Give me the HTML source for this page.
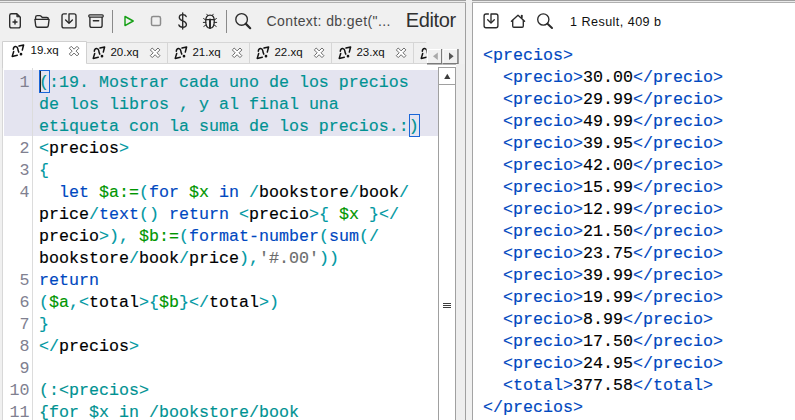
<!DOCTYPE html>
<html>
<head>
<meta charset="utf-8">
<title>BaseX</title>
<style>
html,body{margin:0;padding:0;}
body{width:795px;height:420px;overflow:hidden;background:#f0f0f0;position:relative;font-family:"Liberation Sans",sans-serif;color:#202020;}
.abs{position:absolute;}
#topline{left:0;top:0;width:795px;height:3px;background:linear-gradient(#a0a0a0 0 1px,#ebebeb 1px 2px,#b0b0b0 2px 3px);}
#topwhite{left:466px;top:0;width:6px;height:3px;background:#f0f0f0;}
/* toolbar */
.ico{position:absolute;overflow:visible;}
.sep{position:absolute;width:1px;background:#a0a0a0;}
#ctx{left:266.5px;top:13px;font-size:14px;color:#484848;letter-spacing:0.4px;white-space:nowrap;line-height:16px;}
#edt{left:405.8px;top:9px;font-size:20px;color:#303030;letter-spacing:-0.4px;white-space:nowrap;line-height:22px;}
/* tabs */
.tab{position:absolute;top:43px;height:19px;border-right:1px solid #d0d0d0;box-sizing:border-box;font-size:11.5px;color:#101010;white-space:nowrap;}
.tab .lbl{position:absolute;left:26px;top:3px;}
.tab.sel{top:41px;height:22px;background:#fff;border:1px solid #d8d8d8;border-bottom:none;}
.tab.sel .lbl{top:4px;left:26px;}
.tl{position:absolute;font-size:11.5px;color:#101010;white-space:nowrap;line-height:13px;}
/* editor */
#leftpanel{left:0;top:3px;width:465px;height:417px;border-right:1px solid #a0a0a0;}
#edbox{left:2px;top:64px;width:454px;height:356px;background:#fff;border-left:1px solid #d8d8d8;box-sizing:border-box;}
#hl{left:4px;top:70px;width:434px;height:66px;background:#e4e4f0;}
#gutline{left:32px;top:67px;width:1px;height:353px;background:#dcdcdc;}
#brk1{left:39px;top:70px;width:11px;height:23px;border:1px solid #1a66d8;box-sizing:border-box;}
#brk2{left:409px;top:114px;width:11px;height:23px;border:1px solid #1a66d8;box-sizing:border-box;}
#caret{left:40px;top:71px;width:1px;height:21px;background:#202020;}
.code{position:absolute;font-family:"Liberation Mono",monospace;font-size:16.67px;line-height:22px;white-space:pre;color:#000;-webkit-text-stroke:0.15px;}
.ln{position:absolute;font-family:"Liberation Mono",monospace;font-size:16.67px;line-height:22px;color:#808090;text-align:right;width:30px;left:-0.5px;white-space:pre;}
.c{color:#009292;}
.k{color:#0048c0;}
.v{color:#009600;}
.p{color:#0098a2;}
.s{color:#6c6c6c;}
.t{color:#0048c0;}
/* scrollbar */
#sb{left:456px;top:64px;width:9px;height:356px;background:#eeeeee;}
#sbthumb{left:438px;top:84px;width:18px;height:340px;background:#fff;border:1px solid #a0a0a0;box-sizing:border-box;}
#sbup{left:438px;top:67px;width:18px;height:18px;background:#fff;border:1px solid #a0a0a0;box-sizing:border-box;}
/* divider */
#div1{display:none}
#div2{display:none}
#rp{left:472px;top:3px;width:323px;height:417px;background:#fff;border-left:1px solid #a4a4a4;box-sizing:border-box;}
#res{left:570px;top:15px;font-size:12.6px;color:#101010;letter-spacing:0.45px;white-space:nowrap;line-height:14px;}
</style>
</head>
<body>
<div class="abs" id="rp"></div>
<div class="abs" id="topline"></div>
<div class="abs" id="topwhite"></div>

<!-- TOOLBAR ICONS -->
<svg class="abs" style="left:0;top:0" width="795" height="40" viewBox="0 0 795 40" fill="none" stroke="#2a2a2a" stroke-width="1.35" stroke-linecap="round" stroke-linejoin="round">
<!-- new file -->
<path d="M11.5 13.7 H16.8 L20.3 17.2 V26 Q20.3 27.9 18.4 27.9 H11.6 Q9.7 27.9 9.7 26 V15.5 Q9.7 13.7 11.5 13.7 Z"/>
<path d="M17.2 14.1 L19.9 16.8 H17.2 Z" fill="#2a2a2a" stroke-width="1"/>
<path d="M13 22 H17 M15 20 V24" stroke-width="1.4"/>
<!-- folder -->
<path d="M35.6 19.3 V17.3 Q35.6 15.6 37.3 15.6 H39.8 Q40.6 15.6 41.2 16.3 L42.3 17.5 H46.8 Q48.4 17.5 48.4 19.3"/>
<path d="M34.9 19.4 H49.1 L48.3 25.6 Q48.1 27.2 46.5 27.2 H37.5 Q35.9 27.2 35.7 25.6 Z"/>
<!-- save -->
<path d="M66.4 13.8 H63.9 Q62 13.8 62 15.7 V25.9 Q62 27.8 63.9 27.8 H74.1 Q76 27.8 76 25.9 V15.7 Q76 13.8 74.1 13.8 H69 V22.6"/>
<path d="M65.6 20 L69 23.2 L72.4 20"/>
<!-- archive -->
<rect x="88.7" y="14.95" width="14.6" height="2.2" rx="1.1" stroke-width="1.2"/>
<path d="M89.9 17.3 V25.4 Q89.9 27.3 91.8 27.3 H100.2 Q102.1 27.3 102.1 25.4 V17.5"/>
<path d="M93.3 20.7 H98.7"/>
<!-- sep -->
<path d="M112.5 10 V33" stroke="#8a8a8a" stroke-width="1" stroke-linecap="butt"/>
<!-- play -->
<path d="M125 16.5 V25.6 L133.2 21 Z" stroke="#16a016" stroke-width="1.45"/>
<!-- stop -->
<rect x="151.5" y="16.6" width="9" height="8.9" rx="1.6" stroke="#8c8c8c" stroke-width="1.5"/>
<!-- dollar -->
<path d="M186.2 16.6 Q185.6 14.6 182.7 14.6 Q179.3 14.6 179.3 17.4 Q179.3 19.6 182.7 20.8 Q186.4 22 186.4 24.4 Q186.4 27.2 182.7 27.2 Q179.6 27.2 178.9 25"/>
<path d="M182.7 12.8 V29"/>
<!-- bug -->
<path d="M205.7 21 Q205.7 15.2 210 15.2 Q214.3 15.2 214.3 21 Q214.3 28.2 210 28.2 Q205.7 28.2 205.7 21 Z" stroke-width="1.3"/>
<path d="M206 19.6 H214" stroke-width="1.3"/>
<path d="M210 19.6 V28" stroke-width="2"/>
<path d="M207.8 15.6 L206.8 14.2 M212.2 15.6 L213.2 14.2 M205.8 20 L203.6 18.6 M214.2 20 L216.4 18.6 M205.8 22.4 H203.3 M214.2 22.4 H216.7 M206.2 24.8 L203.8 26.4 M213.8 24.8 L216.2 26.4" stroke-width="1"/>
<!-- sep -->
<path d="M226.5 10 V33" stroke="#8a8a8a" stroke-width="1" stroke-linecap="butt"/>
<!-- search -->
<circle cx="241.6" cy="19.4" r="5.8"/>
<path d="M245.9 23.9 L250.2 28.2" stroke-width="2.2"/>
<!-- right: save -->
<path d="M488.4 14 H486 Q484.1 14 484.1 15.9 V25.8 Q484.1 27.7 486 27.7 H496 Q497.9 27.7 497.9 25.8 V15.9 Q497.9 14 496 14 H491 V22.4"/>
<path d="M487.7 19.8 L491 23 L494.3 19.8"/>
<!-- home -->
<path d="M511.4 21.2 L518 15.2 L524.6 21.2"/>
<path d="M512.7 20.4 V26 Q512.7 27.2 513.9 27.2 H522.1 Q523.3 27.2 523.3 26 V20.4"/>
<path d="M521.8 17.6 V15.6" stroke-width="1.8"/>
<!-- search -->
<circle cx="543.3" cy="19.5" r="5.6"/>
<path d="M547.5 23.8 L552 28" stroke-width="2"/>
</svg>
<div class="abs" id="ctx">Context: db:get("...</div>
<div class="abs" id="edt">Editor</div>

<div class="abs" id="leftpanel"></div>
<div class="abs" id="edbox"></div>
<div class="abs" id="hl"></div>
<div class="abs" id="gutline"></div>
<div class="abs" id="brk1"></div>
<div class="abs" id="brk2"></div>
<div class="abs" id="caret"></div>
<!-- TABS -->
<svg class="abs" style="left:0;top:38px" width="470" height="30" viewBox="0 38 470 30">
<path d="M86.5 42.5 H426.5" stroke="#d6d6d6" stroke-width="1" fill="none"/>
<path d="M86.5 63.5 H458" stroke="#d6d6d6" stroke-width="1" fill="none"/>
<path d="M167.5 43 V63" stroke="#d6d6d6" stroke-width="1" fill="none"/>
<path d="M249.5 43 V63" stroke="#d6d6d6" stroke-width="1" fill="none"/>
<path d="M331.5 43 V63" stroke="#d6d6d6" stroke-width="1" fill="none"/>
<path d="M413.5 43 V63" stroke="#d6d6d6" stroke-width="1" fill="none"/>
<path d="M2.5 68 V41.5 H86.5 V63.5" stroke="#d0d0d0" stroke-width="1" fill="#fff"/>
<rect x="3" y="42" width="83" height="26" fill="#fff"/>
<g transform="translate(0.00,0.00)" stroke="#111" stroke-width="1.5" fill="none" stroke-linecap="round" stroke-linejoin="round"><path d="M13.7 51.5 L12.2 56.4 L17.3 55.2"/><path d="M13.3 49.3 Q13.5 46.3 15.7 46.4 Q17.6 46.6 17.8 48.7 Q18 50.5 18.8 52.1"/><circle cx="21" cy="54.2" r="0.6" fill="#111"/><path d="M19 46.1 L23.6 45 L22.3 50.1"/></g>
<g transform="translate(81.00,2.00)" stroke="#111" stroke-width="1.5" fill="none" stroke-linecap="round" stroke-linejoin="round"><path d="M13.7 51.5 L12.2 56.4 L17.3 55.2"/><path d="M13.3 49.3 Q13.5 46.3 15.7 46.4 Q17.6 46.6 17.8 48.7 Q18 50.5 18.8 52.1"/><circle cx="21" cy="54.2" r="0.6" fill="#111"/><path d="M19 46.1 L23.6 45 L22.3 50.1"/></g>
<g transform="translate(163.00,2.00)" stroke="#111" stroke-width="1.5" fill="none" stroke-linecap="round" stroke-linejoin="round"><path d="M13.7 51.5 L12.2 56.4 L17.3 55.2"/><path d="M13.3 49.3 Q13.5 46.3 15.7 46.4 Q17.6 46.6 17.8 48.7 Q18 50.5 18.8 52.1"/><circle cx="21" cy="54.2" r="0.6" fill="#111"/><path d="M19 46.1 L23.6 45 L22.3 50.1"/></g>
<g transform="translate(245.00,2.00)" stroke="#111" stroke-width="1.5" fill="none" stroke-linecap="round" stroke-linejoin="round"><path d="M13.7 51.5 L12.2 56.4 L17.3 55.2"/><path d="M13.3 49.3 Q13.5 46.3 15.7 46.4 Q17.6 46.6 17.8 48.7 Q18 50.5 18.8 52.1"/><circle cx="21" cy="54.2" r="0.6" fill="#111"/><path d="M19 46.1 L23.6 45 L22.3 50.1"/></g>
<g transform="translate(327.00,2.00)" stroke="#111" stroke-width="1.5" fill="none" stroke-linecap="round" stroke-linejoin="round"><path d="M13.7 51.5 L12.2 56.4 L17.3 55.2"/><path d="M13.3 49.3 Q13.5 46.3 15.7 46.4 Q17.6 46.6 17.8 48.7 Q18 50.5 18.8 52.1"/><circle cx="21" cy="54.2" r="0.6" fill="#111"/><path d="M19 46.1 L23.6 45 L22.3 50.1"/></g>
<g transform="translate(409.00,2.00)" stroke="#111" stroke-width="1.5" fill="none" stroke-linecap="round" stroke-linejoin="round"><path d="M13.7 51.5 L12.2 56.4 L17.3 55.2"/><path d="M13.3 49.3 Q13.5 46.3 15.7 46.4 Q17.6 46.6 17.8 48.7 Q18 50.5 18.8 52.1"/><circle cx="21" cy="54.2" r="0.6" fill="#111"/><path d="M19 46.1 L23.6 45 L22.3 50.1"/></g>
<path d="M71.22 46.30 L74.10 49.18 L76.98 46.30 L78.90 48.22 L76.02 51.10 L78.90 53.98 L76.98 55.90 L74.10 53.02 L71.22 55.90 L69.30 53.98 L72.18 51.10 L69.30 48.22 Z" stroke="#6c6c6c" stroke-width="1" fill="#fff" stroke-linejoin="round"/>
<path d="M152.22 48.00 L155.10 50.88 L157.98 48.00 L159.90 49.92 L157.02 52.80 L159.90 55.68 L157.98 57.60 L155.10 54.72 L152.22 57.60 L150.30 55.68 L153.18 52.80 L150.30 49.92 Z" stroke="#6c6c6c" stroke-width="1" fill="#fff" stroke-linejoin="round"/>
<path d="M234.22 48.00 L237.10 50.88 L239.98 48.00 L241.90 49.92 L239.02 52.80 L241.90 55.68 L239.98 57.60 L237.10 54.72 L234.22 57.60 L232.30 55.68 L235.18 52.80 L232.30 49.92 Z" stroke="#6c6c6c" stroke-width="1" fill="#fff" stroke-linejoin="round"/>
<path d="M316.22 48.00 L319.10 50.88 L321.98 48.00 L323.90 49.92 L321.02 52.80 L323.90 55.68 L321.98 57.60 L319.10 54.72 L316.22 57.60 L314.30 55.68 L317.18 52.80 L314.30 49.92 Z" stroke="#6c6c6c" stroke-width="1" fill="#fff" stroke-linejoin="round"/>
<path d="M398.22 48.00 L401.10 50.88 L403.98 48.00 L405.90 49.92 L403.02 52.80 L405.90 55.68 L403.98 57.60 L401.10 54.72 L398.22 57.60 L396.30 55.68 L399.18 52.80 L396.30 49.92 Z" stroke="#6c6c6c" stroke-width="1" fill="#fff" stroke-linejoin="round"/>
<rect x="426.6" y="40" width="38" height="23" fill="#f0f0f0"/>
<rect x="427" y="49" width="15.5" height="15.5" fill="#f0f0f0"/><path d="M427.5 63.5 V49.5 H441.5" stroke="#ffffff" stroke-width="1" fill="none"/><path d="M427 63.75 H441.75 V49" stroke="#7a7a7a" stroke-width="1.5" fill="none"/>
<rect x="442.5" y="49" width="16.19999999999999" height="15.5" fill="#f0f0f0"/><path d="M443.0 63.5 V49.5 H457.7" stroke="#ffffff" stroke-width="1" fill="none"/><path d="M442.5 63.75 H457.95 V49" stroke="#7a7a7a" stroke-width="1.5" fill="none"/>
<path d="M437.8 52.6 V60 L433 56.3 Z" fill="#a8a8a8"/>
<path d="M449 52.6 V60 L453.6 56.3 Z" fill="#555"/>
</svg>
<div class="tl" style="left:30.5px;top:44px">19.xq</div>
<div class="tl" style="left:110.4px;top:46px">20.xq</div>
<div class="tl" style="left:192.4px;top:46px">21.xq</div>
<div class="tl" style="left:274.4px;top:46px">22.xq</div>
<div class="tl" style="left:356.4px;top:46px">23.xq</div>

<!-- EDITOR -->
<div class="ln" style="top:72px">1


2
3
4



5
6
7
8
9
10
11</div>
<div class="code" id="code" style="left:39px;top:72px"><span class="c">(:19. Mostrar cada uno de los precios
de los libros , y al final una
etiqueta con la suma de los precios.:)</span>
<span class="p">&lt;</span>precios<span class="p">&gt;</span>
<span class="p">{</span>
  <span class="k">let</span> <span class="v">$a:=</span><span class="p">(</span><span class="k">for</span> <span class="v">$x</span> <span class="k">in</span> <span class="p">/</span>bookstore<span class="p">/</span>book<span class="p">/</span>
price<span class="p">/</span><span class="k">text</span><span class="p">()</span> <span class="k">return</span> <span class="p">&lt;</span>precio<span class="p">&gt;{</span> <span class="v">$x</span> <span class="p">}&lt;/</span>
precio<span class="p">&gt;),</span> <span class="v">$b:=</span><span class="p">(</span><span class="k">format-number</span><span class="p">(</span><span class="k">sum</span><span class="p">(/</span>
bookstore<span class="p">/</span>book<span class="p">/</span>price<span class="p">),</span><span class="s">'#.00'</span><span class="p">))</span>
<span class="k">return</span>
<span class="p">(</span><span class="v">$a</span><span class="p">,&lt;</span>total<span class="p">&gt;{</span><span class="v">$b</span><span class="p">}&lt;/</span>total<span class="p">&gt;)</span>
<span class="p">}</span>
<span class="p">&lt;/</span>precios<span class="p">&gt;</span>

<span class="c">(:&lt;precios&gt;
{for $x in /bookstore/book</span></div>

<div class="abs" id="sb"></div>
<div class="abs" id="sbup"></div>
<div class="abs" id="sbthumb"></div>
<svg class="abs" style="left:438px;top:67px" width="18" height="353" viewBox="438 67 18 353">
<path d="M447.3 73.8 L450.4 79 H444.2 Z" fill="#3c3c3c"/>
<path d="M443 303.5 H451 M443 305.5 H451 M443 307.5 H451" stroke="#3c3c3c" stroke-width="1" fill="none"/>
</svg>

<!-- DIVIDER + RIGHT PANEL -->
<div class="abs" id="div1"></div>
<div class="abs" id="div2"></div>
<div class="abs" id="res">1 Result, 409 b</div>
<div class="code" id="out" style="left:483px;top:45px"><span class="t">&lt;precios&gt;</span>
  <span class="t">&lt;precio&gt;</span>30.00<span class="t">&lt;/precio&gt;</span>
  <span class="t">&lt;precio&gt;</span>29.99<span class="t">&lt;/precio&gt;</span>
  <span class="t">&lt;precio&gt;</span>49.99<span class="t">&lt;/precio&gt;</span>
  <span class="t">&lt;precio&gt;</span>39.95<span class="t">&lt;/precio&gt;</span>
  <span class="t">&lt;precio&gt;</span>42.00<span class="t">&lt;/precio&gt;</span>
  <span class="t">&lt;precio&gt;</span>15.99<span class="t">&lt;/precio&gt;</span>
  <span class="t">&lt;precio&gt;</span>12.99<span class="t">&lt;/precio&gt;</span>
  <span class="t">&lt;precio&gt;</span>21.50<span class="t">&lt;/precio&gt;</span>
  <span class="t">&lt;precio&gt;</span>23.75<span class="t">&lt;/precio&gt;</span>
  <span class="t">&lt;precio&gt;</span>39.99<span class="t">&lt;/precio&gt;</span>
  <span class="t">&lt;precio&gt;</span>19.99<span class="t">&lt;/precio&gt;</span>
  <span class="t">&lt;precio&gt;</span>8.99<span class="t">&lt;/precio&gt;</span>
  <span class="t">&lt;precio&gt;</span>17.50<span class="t">&lt;/precio&gt;</span>
  <span class="t">&lt;precio&gt;</span>24.95<span class="t">&lt;/precio&gt;</span>
  <span class="t">&lt;total&gt;</span>377.58<span class="t">&lt;/total&gt;</span>
<span class="t">&lt;/precios&gt;</span></div>
</body>
</html>
